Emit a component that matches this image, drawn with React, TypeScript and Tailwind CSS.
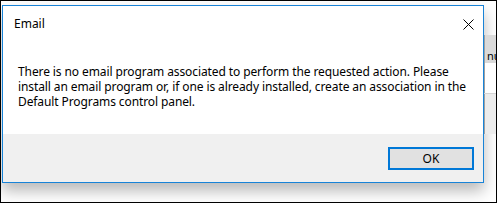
import React from 'react'

const font = { fontFamily: '"Noto Sans", "Open Sans", sans-serif' }

const CloseIcon = () => (
    <svg width="11" height="11" viewBox="0 0 11 11" className="block">
        <path d="M0.5 0.5 L10.5 10.5 M10.5 0.5 L0.5 10.5" stroke="#000" strokeWidth="1" fill="none" />
    </svg>
)

export default function App() {
    return (
        <div className="w-[497px] h-[203px] border border-black bg-white overflow-hidden" style={font}>
            <div className="flex h-full">
                {/* message box */}
                <div className="pt-[4px] pl-[1px]">
                    <div className="w-[482px] h-[178px] border border-[#1883d7] bg-white flex flex-col shadow-[0_8px_14px_rgba(0,0,0,0.28)]">
                        <div className="flex items-center justify-between h-[36px] pl-[11px] pr-[9px] text-[12px] text-black">
                            <span>Email</span>
                            <CloseIcon />
                        </div>
                        <div className="flex-1 pl-[15px] pr-[16px] pt-[22px] text-[12px] leading-[15px] text-black tracking-[-0.1px]">
                            There is no email program associated to perform the requested action. Please
                            install an email program or, if one is already installed, create an association in the
                            Default Programs control panel.
                        </div>
                        <div className="h-[48px] bg-[#f0f0f0] flex items-start justify-end pt-[13px] pr-[9px]">
                            <button className="w-[86px] h-[23px] border-2 border-[#0078d7] bg-[#e1e1e1] text-[12px] text-black leading-none">
                                OK
                            </button>
                        </div>
                    </div>
                </div>
                {/* window behind */}
                <div className="flex-1 flex flex-col pt-[34px]">
                    <div className="h-[28px] bg-[#dadada] border-l border-[#a0a0a0] text-[11px] leading-[12px] pt-[15px] overflow-hidden text-black pl-[2px] whitespace-nowrap">
                        nu
                    </div>
                    <div className="h-[30px] bg-white border-l border-[#a0a0a0]"></div>
                    <div className="h-[1px] bg-[#d4d4d4]"></div>
                    <div className="h-[40px] bg-[#ececec] border-l border-[#a0a0a0]"></div>
                </div>
            </div>
        </div>
    )
}
